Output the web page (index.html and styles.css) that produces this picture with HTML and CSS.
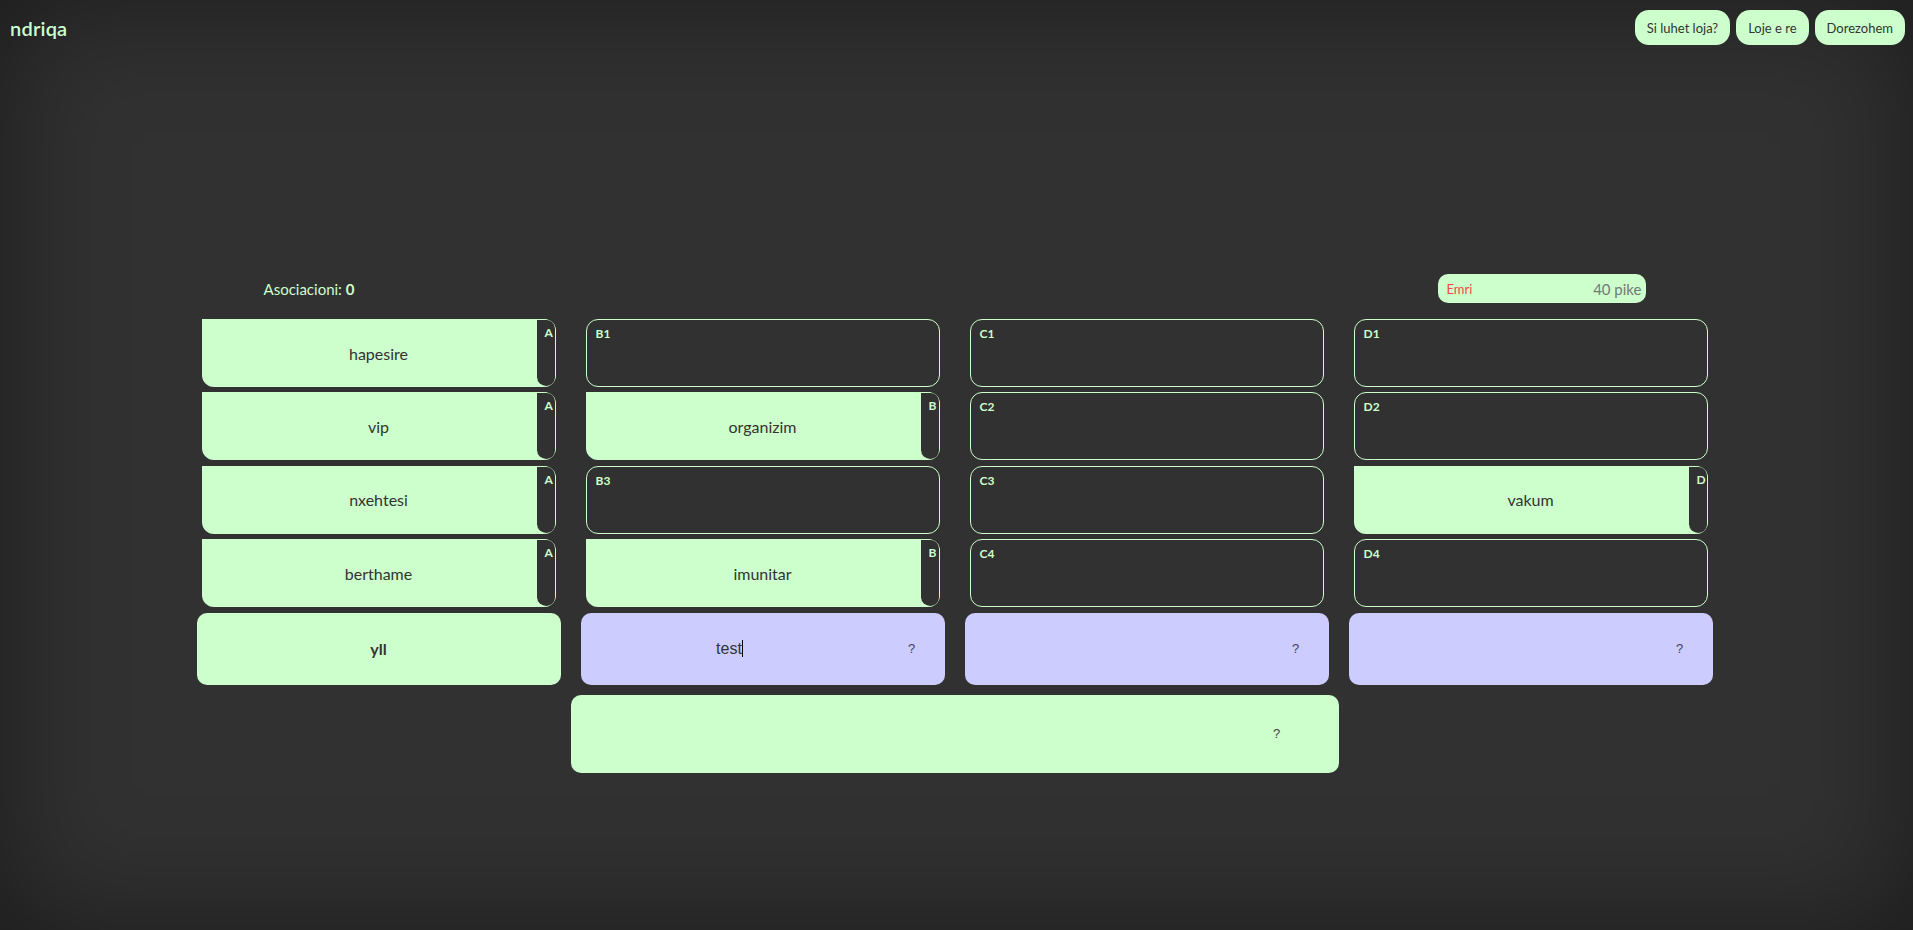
FILE: index.html
```html
<!DOCTYPE html>
<html lang="sq">
<head>
    <meta charset="UTF-8">
    <meta name="viewport" content="width=device-width, initial-scale=1.0">
    <title>ndriqa</title>
    <link rel="stylesheet" href="styles.css">
</head>
<body>
    <div class="page">
        <header class="topbar">
            <div class="logo">ndriqa</div>
            <nav class="menu">
                <button class="pill">Si luhet loja?</button>
                <button class="pill">Loje e re</button>
                <button class="pill">Dorezohem</button>
            </nav>
        </header>

        <main class="board">
            <div class="board-head">
                <div class="assoc">Asociacioni: <b>0</b></div>
                <div class="score">
                    <span class="player">Emri</span>
                    <span class="points">40 pike</span>
                </div>
            </div>

            <div class="columns">
                <div class="column">
                    <div class="tile open">hapesire<span class="side">A</span></div>
                    <div class="tile open">vip<span class="side">A</span></div>
                    <div class="tile open">nxehtesi<span class="side">A</span></div>
                    <div class="tile open">berthame<span class="side">A</span></div>
                    <div class="answer solved">yll</div>
                </div>
                <div class="column">
                    <div class="tile"><span class="label">B1</span></div>
                    <div class="tile open">organizim<span class="side">B</span></div>
                    <div class="tile"><span class="label">B3</span></div>
                    <div class="tile open">imunitar<span class="side">B</span></div>
                    <div class="answer guess">
                        <div class="field"><span class="caret">test</span></div>
                        <div class="hint">?</div>
                    </div>
                </div>
                <div class="column">
                    <div class="tile"><span class="label">C1</span></div>
                    <div class="tile"><span class="label">C2</span></div>
                    <div class="tile"><span class="label">C3</span></div>
                    <div class="tile"><span class="label">C4</span></div>
                    <div class="answer guess">
                        <div class="field"></div>
                        <div class="hint">?</div>
                    </div>
                </div>
                <div class="column">
                    <div class="tile"><span class="label">D1</span></div>
                    <div class="tile"><span class="label">D2</span></div>
                    <div class="tile open">vakum<span class="side">D</span></div>
                    <div class="tile"><span class="label">D4</span></div>
                    <div class="answer guess">
                        <div class="field"></div>
                        <div class="hint">?</div>
                    </div>
                </div>
            </div>

            <div class="final">
                <div class="field"></div>
                <div class="hint">?</div>
            </div>
        </main>
    </div>
</body>
</html>
```

FILE: styles.css
```css
html, body {
    margin: 0;
    padding: 0;
}
body {
    font-family: Lato, "Noto Sans", sans-serif;
    background-color: #313131;
    color: #333;
}
.page {
    min-height: 100vh;
    box-sizing: border-box;
    box-shadow: inset 0 0 120px rgba(0, 0, 0, 0.45);
}
.topbar {
    display: flex;
    justify-content: space-between;
    align-items: center;
    padding: 10px 8px 10px 10px;
}
.logo {
    color: #ccffcc;
    font-size: 20px;
    font-weight: 600;
    letter-spacing: 0.2px;
}
.menu {
    display: flex;
    gap: 6px;
}
.pill {
    font-family: inherit;
    font-size: 13px;
    color: #333;
    background-color: #ccffcc;
    border: none;
    border-radius: 14px;
    height: 35px;
    padding: 0 12px;
    cursor: pointer;
}
.board {
    width: 1506px;
    margin: 219px 0 0 calc(50% - 755px);
}
.board-head {
    display: flex;
    justify-content: space-between;
    align-items: center;
    padding: 0 62px;
    margin-bottom: 16px;
}
.assoc {
    color: #ccffcc;
    font-size: 15px;
}
.assoc b {
    font-weight: 700;
}
.score {
    display: flex;
    justify-content: space-between;
    align-items: center;
    width: 208px;
    height: 29px;
    box-sizing: border-box;
    padding: 0 4px 0 9px;
    background-color: #ccffcc;
    border-radius: 10px;
}
.player {
    color: #ff4444;
    font-size: 13px;
}
.points {
    color: #777;
    font-size: 15px;
}
.columns {
    display: grid;
    grid-template-columns: repeat(4, 354px);
    column-gap: 30px;
}
.column {
    display: flex;
    flex-direction: column;
    gap: 5.4px;
}
.tile {
    position: relative;
    height: 68px;
    box-sizing: border-box;
    border: 1px solid #ccffcc;
    border-radius: 12px;
    background-color: #313131;
}
.tile .label {
    position: absolute;
    top: 6px;
    left: 9px;
    color: #ccffcc;
    font-size: 12px;
    font-weight: 700;
}
.tile.open {
    display: flex;
    align-items: center;
    justify-content: center;
    border: none;
    border-radius: 0 12px 12px 12px;
    background-color: #ccffcc;
    font-size: 16px;
    overflow: hidden;
}
.tile.open .side {
    position: absolute;
    top: 0;
    right: 0;
    bottom: 0;
    width: 19px;
    box-sizing: border-box;
    padding: 5px 0 0 8px;
    background-color: #313131;
    border: 1px solid #ccffcc;
    border-left: none;
    border-radius: 0 12px 12px 12px;
    color: #ccffcc;
    font-size: 12px;
    font-weight: 700;
    white-space: nowrap;
}
.answer {
    display: flex;
    align-items: center;
    height: 72px;
    margin: 0 -5px;
    border-radius: 10px;
    font-size: 16px;
}
.answer.solved {
    justify-content: center;
    background-color: #ccffcc;
    font-weight: 700;
}
.answer.guess {
    background-color: #ccccff;
}
.field {
    flex: 1;
    text-align: center;
    font-family: "Liberation Sans", Arial, sans-serif;
    font-size: 16px;
    color: #333;
}
.caret {
    border-right: 1px solid #000;
}
.hint {
    width: 66px;
    text-align: center;
    font-family: "Liberation Sans", Arial, sans-serif;
    font-size: 13px;
    color: #444;
}
.final {
    display: flex;
    align-items: center;
    width: 768px;
    height: 78px;
    margin: 10px auto 0;
    background-color: #ccffcc;
    border-radius: 10px;
}
.final .hint {
    width: 124px;
}
```
